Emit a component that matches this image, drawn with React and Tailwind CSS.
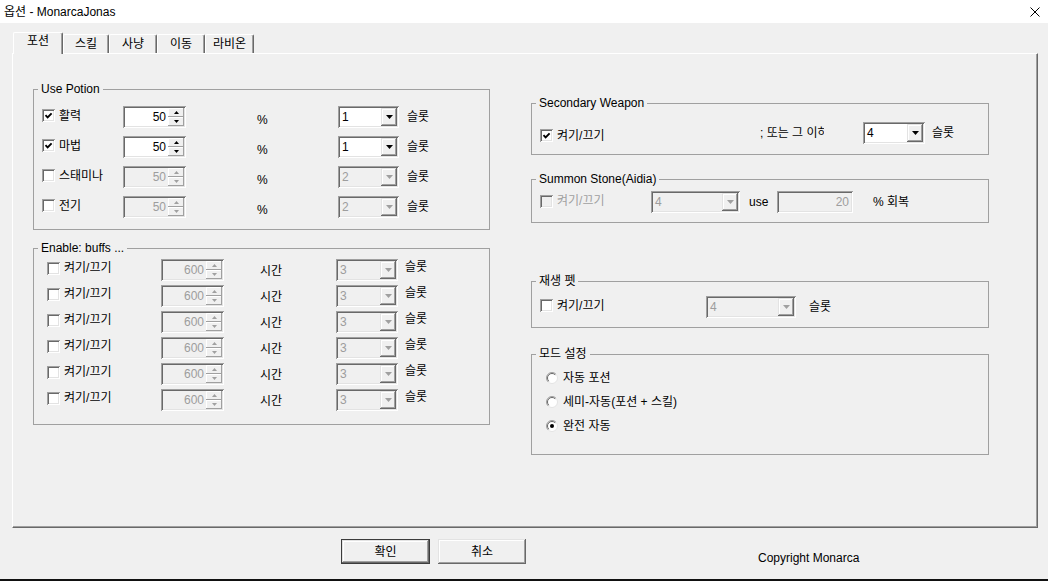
import React from "react";

const SUNKEN =
  "shadow-[inset_1px_1px_0_#a0a0a0,inset_-1px_-1px_0_#ffffff,inset_2px_2px_0_#696969,inset_-2px_-2px_0_#e3e3e3]";
const RAISED =
  "shadow-[inset_-1px_-1px_0_#696969,inset_1px_1px_0_#e3e3e3,inset_-2px_-2px_0_#a0a0a0,inset_2px_2px_0_#ffffff]";
const RAISED_SM = "shadow-[inset_-1px_-1px_0_#a0a0a0,inset_1px_1px_0_#ffffff]";

function Check({ checked, disabled }) {
  return (
    <span
      className={`w-[13px] h-[13px] shrink-0 flex items-center justify-center ${
        disabled ? "bg-[#f0f0f0]" : "bg-white"
      } ${SUNKEN}`}
    >
      {checked && (
        <svg width="9" height="9" viewBox="0 0 9 9">
          <path d="M1.5 4.2 L3.6 6.3 L7.6 2.3" stroke="#000" strokeWidth="1.9" fill="none" />
        </svg>
      )}
    </span>
  );
}

function SpinBtn({ up, disabled }) {
  const c = disabled ? "#a0a0a0" : "#000";
  return (
    <div className={`flex-1 flex items-center justify-center bg-[#f0f0f0] ${RAISED_SM}`}>
      <svg width="5" height="3" viewBox="0 0 5 3">
        <polygon points={up ? "0,3 5,3 2.5,0" : "0,0 5,0 2.5,3"} fill={c} />
      </svg>
    </div>
  );
}

function Spin({ value, disabled }) {
  return (
    <div
      className={`h-[22px] w-[63px] shrink-0 flex p-[2px] ${
        disabled ? "bg-[#f0f0f0] text-[#9d9d9d]" : "bg-white text-black"
      } ${SUNKEN}`}
    >
      <div className="flex-1 flex items-center justify-end pr-[2px]">{value}</div>
      <div className="w-[16px] flex flex-col">
        <SpinBtn up disabled={disabled} />
        <SpinBtn disabled={disabled} />
      </div>
    </div>
  );
}

function Combo({ value, disabled, w }) {
  return (
    <div
      className={`h-[22px] shrink-0 flex p-[2px] ${w} ${
        disabled ? "bg-[#f0f0f0] text-[#9d9d9d]" : "bg-white text-black"
      } ${SUNKEN}`}
    >
      <div className="flex-1 flex items-center pl-[2px]">{value}</div>
      <div className={`w-[16px] flex items-center justify-center bg-[#f0f0f0] ${RAISED}`}>
        <svg width="7" height="4" viewBox="0 0 7 4">
          <polygon points="0,0 7,0 3.5,4" fill={disabled ? "#a0a0a0" : "#000"} />
        </svg>
      </div>
    </div>
  );
}

function Radio({ checked }) {
  return (
    <svg width="12" height="12" viewBox="0 0 12 12" className="shrink-0">
      <circle cx="6" cy="6" r="5.5" fill="#fff" stroke="#e3e3e3" />
      <path d="M2.1 9.9 A5.5 5.5 0 0 1 9.9 2.1" stroke="#a0a0a0" fill="none" />
      <path d="M2.8 9.2 A4.5 4.5 0 0 1 9.2 2.8" stroke="#696969" fill="none" />
      {checked && <circle cx="6" cy="6" r="2" fill="#000" />}
    </svg>
  );
}

function Group({ label, className, children }) {
  return (
    <div className={`relative border border-[#a0a0a0] shrink-0 ${className}`}>
      <span className="absolute -top-[8px] left-[4px] px-[3px] bg-[#f0f0f0] whitespace-nowrap">
        {label}
      </span>
      {children}
    </div>
  );
}

function Tab({ children, selected, w }) {
  return (
    <div
      className={`${w} ${
        selected ? "h-[22px] -mb-[1px] relative z-10 pb-[5px]" : "h-[19px] pb-[1px]"
      } shrink-0 flex items-center justify-center bg-[#f0f0f0] border-t border-l border-r border-t-white border-l-white border-r-[#696969] shadow-[inset_-1px_0_0_#a0a0a0] rounded-t-[2px]`}
    >
      {children}
    </div>
  );
}

const potions = [
  { name: "활력", checked: true, dis: false, slot: "1" },
  { name: "마법", checked: true, dis: false, slot: "1" },
  { name: "스태미나", checked: false, dis: true, slot: "2" },
  { name: "전기", checked: false, dis: true, slot: "2" },
];

export default function App() {
  return (
    <div className="w-[1048px] h-[581px] bg-[#f0f0f0] flex flex-col overflow-hidden font-['Liberation_Sans','Noto_Sans_CJK_KR',sans-serif] text-[12px] leading-[14px] text-black">
      {/* Title bar */}
      <div className="h-[23px] bg-white flex items-center justify-between pl-[4px] pr-[8px] shrink-0">
        <span>옵션 - MonarcaJonas</span>
        <svg width="10" height="10" viewBox="0 0 10 10">
          <path d="M0.5 0.5 L9.5 9.5 M9.5 0.5 L0.5 9.5" stroke="#000" strokeWidth="1" />
        </svg>
      </div>

      {/* Tabs */}
      <div className="flex items-end h-[21px] mt-[9px] ml-[13px] shrink-0">
        <Tab selected w="w-[50px]">포션</Tab>
        <Tab w="w-[46px]">스킬</Tab>
        <Tab w="w-[48px]">사냥</Tab>
        <Tab w="w-[48px]">이동</Tab>
        <Tab w="w-[49px]">라비온</Tab>
      </div>

      {/* Panel */}
      <div className="ml-[12px] w-[1026px] h-[475px] shrink-0 border border-t-white border-l-white border-r-[#696969] border-b-[#696969] shadow-[inset_-1px_-1px_0_#a0a0a0] flex items-start pl-[20px] pt-[35px]">
        {/* Left column */}
        <div className="w-[457px] flex flex-col shrink-0">
          <Group label="Use Potion" className="h-[141px] pt-[16px] pl-[8px]">
            <div className="flex flex-col gap-[8px]">
              {potions.map((p) => (
                <div key={p.name} className="flex items-center h-[22px]">
                  <div className="w-[81px] flex items-center mb-[3px] shrink-0">
                    <Check checked={p.checked} />
                    <span className="ml-[4px]">{p.name}</span>
                  </div>
                  <Spin value="50" disabled={p.dis} />
                  <span className="ml-[71px] w-[81px] mt-[6px] shrink-0">%</span>
                  <Combo value={p.slot} disabled={p.dis} w="w-[61px]" />
                  <span className="ml-[8px]">슬롯</span>
                </div>
              ))}
            </div>
          </Group>

          <Group label="Enable: buffs ..." className="h-[177px] mt-[18px] pt-[10px] pl-[13px]">
            <div className="flex flex-col gap-[4px]">
              {[0, 1, 2, 3, 4, 5].map((i) => (
                <div key={i} className="flex items-center h-[22px]">
                  <div className="w-[114px] flex items-center mb-[4px] shrink-0">
                    <Check />
                    <span className="ml-[4px]">켜기/끄기</span>
                  </div>
                  <Spin value="600" disabled />
                  <span className="ml-[36px] w-[76px] mt-[2px] shrink-0">시간</span>
                  <Combo value="3" disabled w="w-[62px]" />
                  <span className="ml-[7px] mb-[6px]">슬롯</span>
                </div>
              ))}
            </div>
          </Group>
        </div>

        {/* Right column */}
        <div className="w-[458px] ml-[41px] mt-[14px] flex flex-col shrink-0">
          <Group label="Secondary Weapon" className="h-[52px] pt-[18px] pl-[8px]">
            <div className="flex items-center h-[22px]">
              <div className="w-[220px] flex items-center mt-[5px] shrink-0">
                <Check checked />
                <span className="ml-[4px]">켜기/끄기</span>
              </div>
              <span className="w-[64px] overflow-hidden whitespace-nowrap shrink-0">; 또는 그 이하</span>
              <div className="ml-[39px]">
                <Combo value="4" w="w-[62px]" />
              </div>
              <span className="ml-[7px]">슬롯</span>
            </div>
          </Group>

          <Group label="Summon Stone(Aidia)" className="h-[44px] mt-[24px] pt-[11px] pl-[8px]">
            <div className="flex items-center h-[22px]">
              <div className="w-[111px] flex items-center mb-[2px] shrink-0 text-[#a0a0a0]">
                <Check disabled />
                <span className="ml-[4px]">켜기/끄기</span>
              </div>
              <Combo value="4" disabled w="w-[89px]" />
              <span className="ml-[9px] w-[28px] shrink-0">use</span>
              <div
                className={`w-[76px] h-[22px] shrink-0 flex items-center justify-end pr-[4px] bg-[#f0f0f0] text-[#9d9d9d] ${SUNKEN}`}
              >
                20
              </div>
              <span className="ml-[20px]">% 회복</span>
            </div>
          </Group>

          <Group label="재생 펫" className="h-[47px] mt-[58px] pt-[14px] pl-[8px]">
            <div className="flex items-center h-[22px]">
              <div className="w-[166px] flex items-center mb-[3px] shrink-0">
                <Check />
                <span className="ml-[4px]">켜기/끄기</span>
              </div>
              <Combo value="4" disabled w="w-[90px]" />
              <span className="ml-[13px]">슬롯</span>
            </div>
          </Group>

          <Group label="모드 설정" className="h-[101px] mt-[26px] pt-[11px] pl-[14px]">
            <div className="flex flex-col">
              <div className="flex items-center h-[24px]">
                <Radio />
                <span className="ml-[5px]">자동 포션</span>
              </div>
              <div className="flex items-center h-[24px]">
                <Radio />
                <span className="ml-[5px]">세미-자동(포션 + 스킬)</span>
              </div>
              <div className="flex items-center h-[24px]">
                <Radio checked />
                <span className="ml-[5px]">완전 자동</span>
              </div>
            </div>
          </Group>
        </div>
      </div>

      {/* Bottom buttons */}
      <div className="flex items-start pl-[341px] mt-[11px] h-[40px] shrink-0">
        <div
          className={`w-[89px] h-[25px] shrink-0 flex items-center justify-center bg-[#f0f0f0] border border-[#3c3c3c] ${RAISED}`}
        >
          확인
        </div>
        <div
          className={`ml-[8px] w-[88px] h-[25px] shrink-0 flex items-center justify-center bg-[#f0f0f0] ${RAISED}`}
        >
          취소
        </div>
        <span className="ml-[232px] mt-[12px] whitespace-nowrap">Copyright Monarca</span>
      </div>
      <div className="h-[2px] bg-[#111111] shrink-0" />
    </div>
  );
}
